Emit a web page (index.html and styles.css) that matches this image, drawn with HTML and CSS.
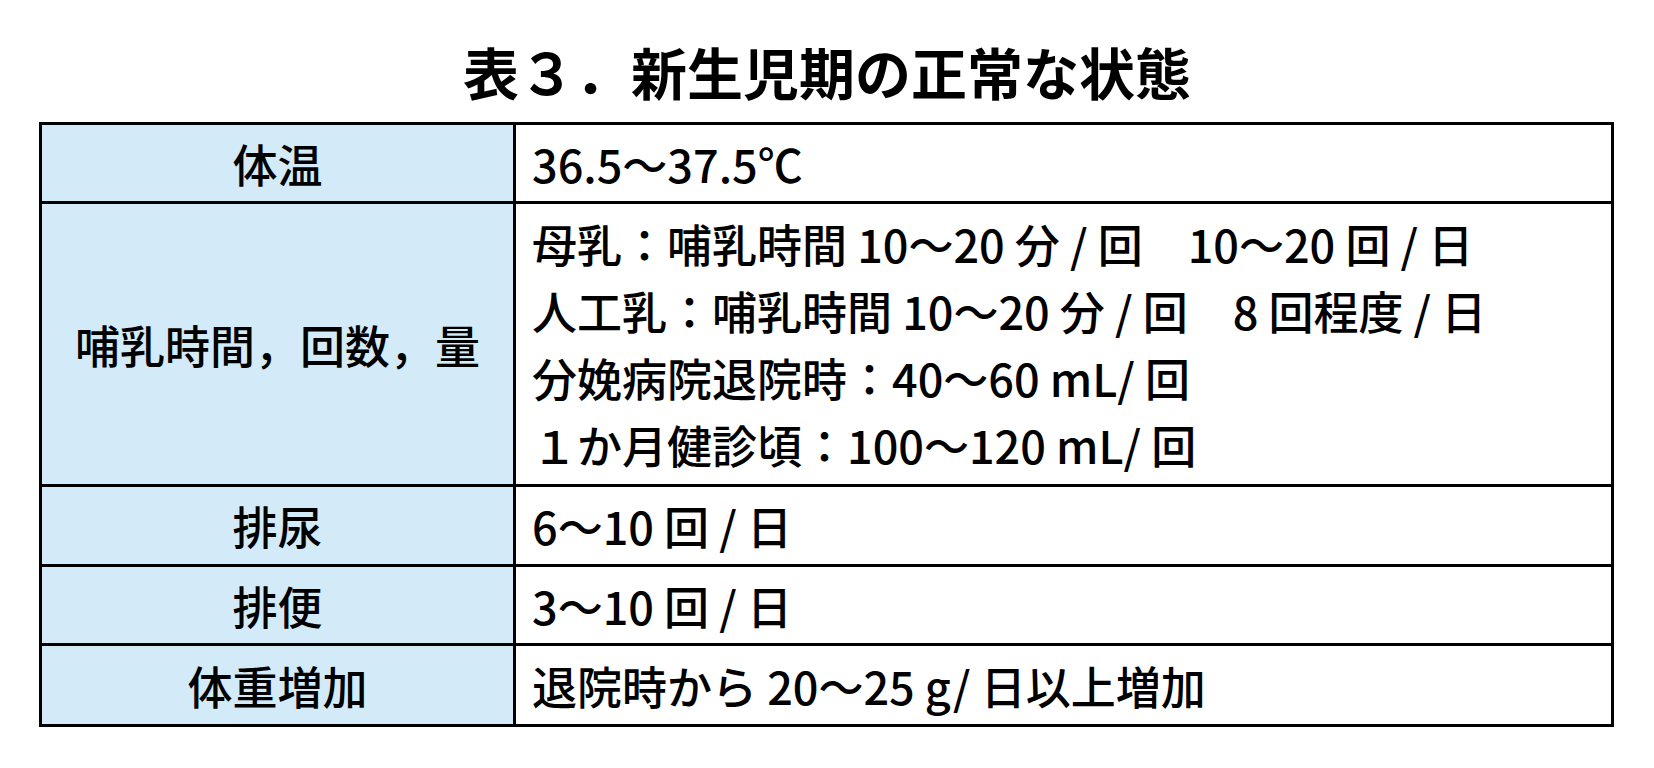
FILE: index.html
```html
<!DOCTYPE html>
<html lang="ja">
<head>
<meta charset="utf-8">
<title>表３．新生児期の正常な状態</title>
<link rel="stylesheet" href="styles.css">
</head>
<body>
<h1 class="title">表３．新生児期の正常な状態</h1>
<table class="grid">
  <colgroup>
    <col class="col-label">
    <col class="col-value">
  </colgroup>
  <tbody>
    <tr class="row row-a">
      <th class="label">体温</th>
      <td class="value">36.5〜37.5℃</td>
    </tr>
    <tr class="row row-b">
      <th class="label">哺乳時間，回数，量</th>
      <td class="value multi">
        <div class="line">母乳：哺乳時間 10〜20 分 / 回　10〜20 回 / 日</div>
        <div class="line">人工乳：哺乳時間 10〜20 分 / 回　8 回程度 / 日</div>
        <div class="line">分娩病院退院時：40〜60 mL/ 回</div>
        <div class="line">１か月健診頃：100〜120 mL/ 回</div>
      </td>
    </tr>
    <tr class="row row-c">
      <th class="label">排尿</th>
      <td class="value">6〜10 回 / 日</td>
    </tr>
    <tr class="row row-d">
      <th class="label">排便</th>
      <td class="value">3〜10 回 / 日</td>
    </tr>
    <tr class="row row-e">
      <th class="label">体重増加</th>
      <td class="value">退院時から 20〜25 g/ 日以上増加</td>
    </tr>
  </tbody>
</table>
</body>
</html>
```

FILE: styles.css
```css
html, body {
  margin: 0;
  padding: 0;
  background: #ffffff;
}

body {
  font-family: "Noto Sans CJK JP", "Noto Sans", sans-serif;
  color: #000000;
}

.title {
  margin: 0;
  padding-top: 43px;
  height: 56px;
  font-size: 56px;
  line-height: 56px;
  font-weight: 700;
  text-align: center;
  letter-spacing: 0;
}

.grid {
  margin: 23px 0 0 39px;
  width: 1575px;
  table-layout: fixed;
  border-collapse: collapse;
  font-size: 45px;
  font-weight: 500;
}

.col-label {
  width: 474px;
}

.grid th,
.grid td {
  border: 3.5px solid #000000;
  padding: 0;
  vertical-align: middle;
}

.label {
  background: #d3eaf8;
  text-align: center;
  font-weight: 500;
}

.value {
  text-align: left;
  padding-left: 16px !important;
  background: #ffffff;
}

.row-a { height: 79px; }
.row-b { height: 283px; }
.row-c { height: 80px; }
.row-d { height: 79px; }
.row-e { height: 81px; }

.line {
  line-height: 67px;
  white-space: nowrap;
}

.value {
  line-height: 1;
  white-space: nowrap;
}
```
